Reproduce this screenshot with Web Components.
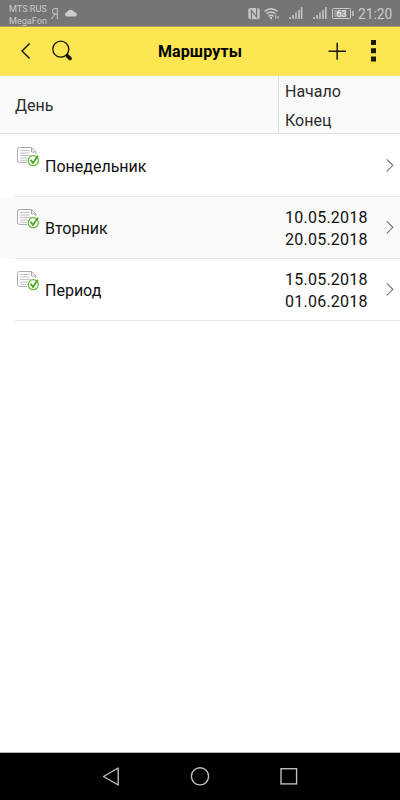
<!DOCTYPE html>
<html lang="ru">
<head>
<meta charset="utf-8">
<title>Маршруты</title>
<style>
    body {
        margin: 0;
        background: #fff;
        font-family: Roboto, "Noto Sans", sans-serif;
    }
</style>
</head>
<body>
<routes-app></routes-app>

<script>
class StatusBar extends HTMLElement {
    constructor() {
        super();
        this.attachShadow({ mode: 'open' });
    }

    connectedCallback() {
        this.shadowRoot.innerHTML = `
            <style>
                :host {
                    display: flex;
                    align-items: center;
                    box-sizing: border-box;
                    height: 27px;
                    padding: 0 8px 0 9px;
                    background: #757575;
                    border-bottom: 1px solid #a99f5c;
                    color: #cbcbcb;
                }
                .carrier {
                    width: 40px;
                    font-size: 9.1px;
                    line-height: 12px;
                    white-space: nowrap;
                    padding-top: 3px;
                }
                .time {
                    font-size: 13.8px;
                    line-height: 16px;
                    margin-left: 4px;
                    width: 34px;
                    white-space: nowrap;
                    padding-top: 2px;
                }
                svg {
                    display: block;
                    flex: none;
                }
                .right {
                    margin-left: auto;
                }
            </style>
            <div class="carrier">MTS RUS<br>MegaFon</div>
            <svg width="30" height="26" fill="none" stroke="#cbcbcb">
                <path d="M8.3 8.3V19M8.3 8.6H6Q3.4 8.7 3.4 11.3T6 14H8.3M6 14L2.6 19"/>
                <path d="M18.4 16.6a2.3 2.3 0 0 1-.3-4.6 4 4 0 0 1 7.2.1 2.3 2.3 0 0 1 .9 4.5z" fill="#cbcbcb" stroke="none"/>
            </svg>
            <svg class="right" width="107" height="26" fill="none" stroke="#cbcbcb">
                <rect x="1.3" y="8" width="11.4" height="11.2" rx="2" fill="#c6c6c6" stroke="none"/>
                <path d="M4.4 19.4V10.4L9.6 17V7.8" stroke="#757575" stroke-width="1.2"/>
                <path d="M17.4 11.5Q24 6 30.6 11.5M19.4 14Q24 10 28.6 14M21.4 16.4Q24 14.2 26.6 16.4" stroke-width="1.4"/>
                <circle cx="24" cy="18" r="1.2" fill="#cbcbcb" stroke="none"/>
                <path d="M28.8 15v3.5M31 18.5V16" stroke-width="1"/>
                <path d="M43 19v-2M46 19v-4M49 19v-6.5M52 19v-9M54.6 19V7" stroke-width="1.5"/>
                <path d="M67 19v-2M70 19v-4M73 19v-6.5M76 19v-9M78.8 19V7" stroke-width="1.5"/>
                <rect x="85.5" y="8.5" width="18" height="10" rx="1"/>
                <rect x="87" y="10" width="11.5" height="7" fill="#999" stroke="none"/>
                <path d="M106 11v5" stroke-width="1.4"/>
                <text x="94.5" y="17" text-anchor="middle" font-size="9" font-weight="500" fill="#e8e8e8" stroke="none">63</text>
            </svg>
            <div class="time">21:20</div>
        `;
    }
}

class AppToolbar extends HTMLElement {
    constructor() {
        super();
        this.attachShadow({ mode: 'open' });
    }

    connectedCallback() {
        this.shadowRoot.innerHTML = `
            <style>
                :host {
                    display: grid;
                    grid-template-columns: 100px 1fr 100px;
                    align-items: center;
                    box-sizing: border-box;
                    height: 49px;
                    background: #fde64f;
                    border-bottom: 1px solid #f3e27b;
                }
                .title {
                    text-align: center;
                    font-size: 16px;
                    font-weight: 700;
                    letter-spacing: 0.12px;
                    line-height: 20px;
                    color: #000;
                    padding-top: 1px;
                }
                svg {
                    display: block;
                }
            </style>
            <svg width="100" height="48" fill="none" stroke="#161408">
                <path d="M29.6 16.5L22 24l7.6 7.6" stroke-width="1.4"/>
                <circle cx="60.8" cy="22.2" r="8" stroke-width="1.3"/>
                <path d="M66 27.5l1.7 1.7" stroke-width="1.4"/>
                <path d="M67.5 29l2.6 2.6" stroke-width="3.6" stroke-linecap="round"/>
            </svg>
            <div class="title"><slot></slot></div>
            <svg width="100" height="48">
                <path d="M28.5 24.3h17.5M37.2 15.8v17" stroke="#1c1a08" stroke-width="1.5"/>
                <path d="M71 13h5v5h-5zM71 21.3h5v5h-5zM71 29.6h5v5h-5z" fill="#1c1a08"/>
            </svg>
        `;
    }
}

class RouteHeader extends HTMLElement {
    constructor() {
        super();
        this.attachShadow({ mode: 'open' });
    }

    connectedCallback() {
        this.shadowRoot.innerHTML = `
            <style>
                :host {
                    display: grid;
                    grid-template-columns: 278px 1fr;
                    box-sizing: border-box;
                    height: 58px;
                    background: #fafafa;
                    border-bottom: 1px solid #e2e2e2;
                    color: #2c2c2c;
                    font-size: 16px;
                }
                .day {
                    padding: 0 0 0 15px;
                    align-self: center;
                }
                .dates {
                    border-left: 1px solid #dedede;
                    padding-left: 6px;
                    line-height: 29px;
                }
                .dates div {
                    height: 29px;
                    padding-top: 1px;
                    box-sizing: border-box;
                }
            </style>
            <div class="day">День</div>
            <div class="dates">
                <div>Начало</div>
                <div>Конец</div>
            </div>
        `;
    }
}

class RouteRow extends HTMLElement {
    constructor() {
        super();
        this.attachShadow({ mode: 'open' });
    }

    connectedCallback() {
        const start = this.getAttribute('start') || '';
        const end = this.getAttribute('end') || '';

        this.shadowRoot.innerHTML = `
            <style>
                :host {
                    display: block;
                    height: 62px;
                    color: #111;
                    font-size: 16px;
                }
                :host([shaded]) {
                    background: #fafafa;
                }
                .row {
                    display: grid;
                    grid-template-columns: 30px 234px 1fr 20px;
                    align-items: center;
                    box-sizing: border-box;
                    height: 62px;
                    margin-left: 15px;
                    border-bottom: 1px solid #e6e6e6;
                }
                .doc {
                    align-self: start;
                    margin-top: 12px;
                }
                .name {
                    padding-top: 1px;
                }
                .dates {
                    padding: 2px 0 0 6px;
                    line-height: 22px;
                    letter-spacing: 0.24px;
                }
                svg {
                    display: block;
                }
            </style>
            <div class="row">
                <svg class="doc" width="26" height="22" fill="none">
                    <path d="M16.5 .5H4.5Q2.5 .5 2.5 2.5V13.5Q2.5 15.5 4.5 15.5H12M16.5 .5L20.8 5V7" stroke="#aaa9b0"/>
                    <path d="M16.5 .5V5H20.8" stroke="#aaa9b0"/>
                    <path d="M5 3.5h9.5M5 6h9.5M5 8.5h11M5 11h8M5 13.3h7" stroke="#bcbcc2" stroke-width=".9"/>
                    <circle cx="18.3" cy="13.7" r="5" fill="#fff" stroke="#67bc3c" stroke-width="1.3"/>
                    <path d="M15.6 12.8l2.4 3.2 4.8-7.3" stroke="#43a51b" stroke-width="1.7"/>
                </svg>
                <div class="name"><slot></slot></div>
                <div class="dates"><div>${start}</div><div>${end}</div></div>
                <svg width="20" height="20" fill="none">
                    <path d="M6.8 3.3l6 6-6 6" stroke="#777" stroke-width="1.2"/>
                </svg>
            </div>
        `;
    }
}

class NavBar extends HTMLElement {
    constructor() {
        super();
        this.attachShadow({ mode: 'open' });
    }

    connectedCallback() {
        this.shadowRoot.innerHTML = `
            <style>
                :host {
                    display: flex;
                    justify-content: center;
                    box-sizing: border-box;
                    height: 48px;
                    background: #000;
                    border-top: 1px solid #b5b5b5;
                }
            </style>
            <svg width="240" height="47" fill="none" stroke="#bdbdbd" stroke-width="1.4">
                <path d="M38.2 15v17L23.5 23.5z" stroke-linejoin="round"/>
                <circle cx="120" cy="23.3" r="8.6"/>
                <rect x="201" y="15.7" width="15.6" height="15.2"/>
            </svg>
        `;
    }
}

class RoutesApp extends HTMLElement {
    constructor() {
        super();
        this.attachShadow({ mode: 'open' });
    }

    connectedCallback() {
        this.shadowRoot.innerHTML = `
            <style>
                :host {
                    display: flex;
                    flex-direction: column;
                    height: 100vh;
                    overflow: hidden;
                }
                main {
                    flex: 1;
                    padding-top: 1px;
                }
            </style>
            <status-bar></status-bar>
            <app-toolbar>Маршруты</app-toolbar>
            <route-header></route-header>
            <main>
                <route-row>Понедельник</route-row>
                <route-row shaded start="10.05.2018" end="20.05.2018">Вторник</route-row>
                <route-row start="15.05.2018" end="01.06.2018">Период</route-row>
            </main>
            <nav-bar></nav-bar>
        `;
    }
}

customElements.define('status-bar', StatusBar);
customElements.define('app-toolbar', AppToolbar);
customElements.define('route-header', RouteHeader);
customElements.define('route-row', RouteRow);
customElements.define('nav-bar', NavBar);
customElements.define('routes-app', RoutesApp);
</script>
</body>
</html>
